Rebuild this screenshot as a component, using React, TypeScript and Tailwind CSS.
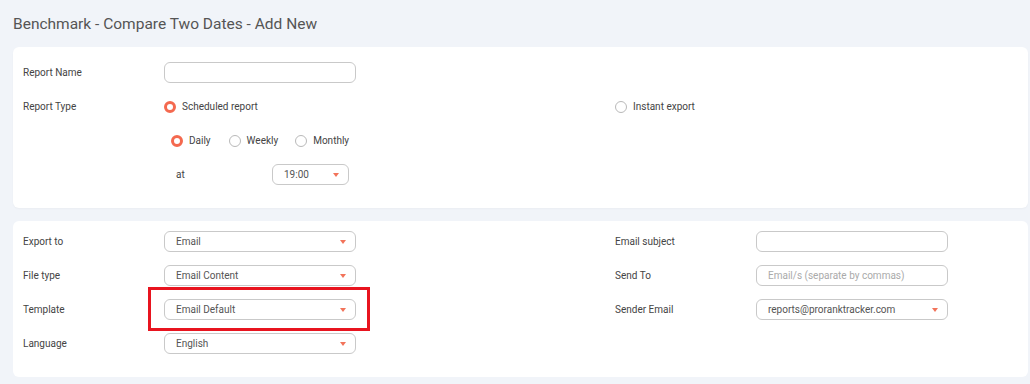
import React from 'react';

const Caret: React.FC = () => (
  <svg width="6" height="4" viewBox="0 0 6 4" className="shrink-0">
    <path d="M0 0 L6 0 L3 4 Z" fill="#f2735a" />
  </svg>
);

const Radio: React.FC<{ checked?: boolean }> = ({ checked }) =>
  checked ? (
    <span className="inline-block w-[12px] h-[12px] rounded-full border-[3px] border-[#f4694f] bg-white shrink-0" />
  ) : (
    <span className="inline-block w-[12px] h-[12px] rounded-full border border-[#b9b9b9] bg-white shrink-0" />
  );

const Label: React.FC<{ children: React.ReactNode }> = ({ children }) => (
  <div className="w-[141px] shrink-0 text-[10px] text-[#444] font-['Roboto',sans-serif]">{children}</div>
);

const Select: React.FC<{ value: string; width?: string }> = ({ value, width = 'w-[192px]' }) => (
  <div className={`${width} h-[21px] rounded-[6px] border border-[#c9c9c9] bg-white flex items-center justify-between pl-[11px] pr-[9px]`}>
    <span className="text-[10px] text-[#555] font-['Roboto',sans-serif]">{value}</span>
    <Caret />
  </div>
);

const TextInput: React.FC<{ placeholder?: string }> = ({ placeholder }) => (
  <div className="w-[192px] h-[21px] rounded-[6px] border border-[#c9c9c9] bg-white flex items-center pl-[11px]">
    {placeholder && <span className="text-[10px] text-[#aaa] font-['Roboto',sans-serif]">{placeholder}</span>}
  </div>
);

const Row: React.FC<{ children: React.ReactNode }> = ({ children }) => (
  <div className="h-[21px] flex items-center">{children}</div>
);

const RadioOption: React.FC<{ checked?: boolean; label: string; className?: string }> = ({ checked, label, className = '' }) => (
  <div className={`flex items-center gap-[6px] ${className}`}>
    <Radio checked={checked} />
    <span className="text-[10px] text-[#444] font-['Roboto',sans-serif]">{label}</span>
  </div>
);

export default function App() {
  return (
    <div className="w-[1030px] h-[384px] overflow-hidden bg-[#f1f4f9] pl-[13px] pr-[2px] font-['Roboto',sans-serif]">
      {/* Header */}
      <h1 className="h-[47px] pt-[13px] text-[15.5px] text-[#555] font-['Roboto',sans-serif] leading-[22px]">
        Benchmark - Compare Two Dates - Add New
      </h1>

      {/* Report card */}
      <div className="bg-white rounded-[6px] pt-[15px] pb-[23px] pl-[10px] flex flex-col gap-[13px] shadow-[0_1px_2px_rgba(0,0,0,0.03)]">
        <Row>
          <Label>Report Name</Label>
          <TextInput />
        </Row>
        <Row>
          <Label>Report Type</Label>
          <div className="w-[451px]">
            <RadioOption checked label="Scheduled report" />
          </div>
          <RadioOption label="Instant export" />
        </Row>
        <Row>
          <div className="w-[148px] shrink-0" />
          <RadioOption checked label="Daily" />
          <RadioOption label="Weekly" className="ml-[18px]" />
          <RadioOption label="Monthly" className="ml-[17px]" />
        </Row>
        <Row>
          <div className="w-[153px] shrink-0" />
          <div className="w-[96px] text-[10px] text-[#444]">at</div>
          <Select value="19:00" width="w-[77px]" />
        </Row>
      </div>

      {/* Export card */}
      <div className="mt-[13px] bg-white rounded-[6px] pt-[10px] pb-[23px] pl-[10px] flex flex-col gap-[13px]">
        <Row>
          <div className="w-[592px] flex items-center">
            <Label>Export to</Label>
            <Select value="Email" />
          </div>
          <Label>Email subject</Label>
          <TextInput />
        </Row>
        <Row>
          <div className="w-[592px] flex items-center">
            <Label>File type</Label>
            <Select value="Email Content" />
          </div>
          <Label>Send To</Label>
          <TextInput placeholder="Email/s (separate by commas)" />
        </Row>
        <Row>
          <div className="w-[592px] flex items-center">
            <Label>Template</Label>
            <div className="relative">
              <Select value="Email Default" />
              <div className="absolute left-[-16px] top-[-12px] w-[222px] h-[44px] border-[3px] border-[#e8141f]" />
            </div>
          </div>
          <Label>Sender Email</Label>
          <Select value="reports@proranktracker.com" />
        </Row>
        <Row>
          <div className="w-[592px] flex items-center">
            <Label>Language</Label>
            <Select value="English" />
          </div>
        </Row>
      </div>
    </div>
  );
}
